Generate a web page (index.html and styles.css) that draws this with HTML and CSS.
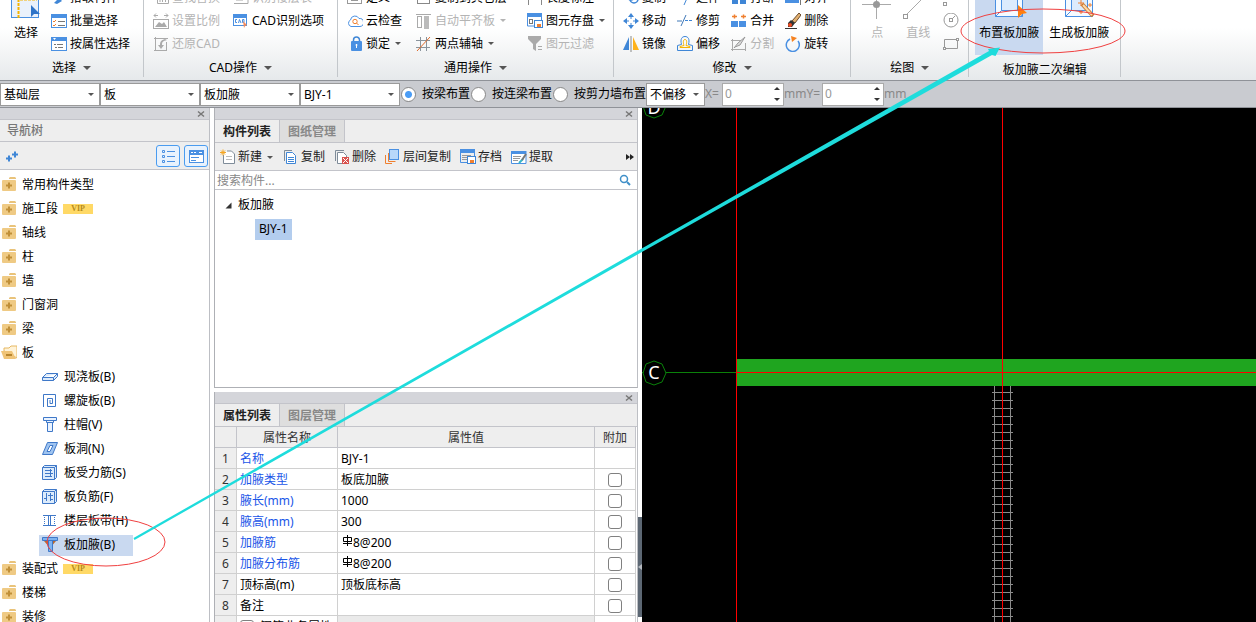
FILE: index.html
```html
<!DOCTYPE html>
<html lang="zh-CN">
<head>
<meta charset="utf-8">
<title>板加腋</title>
<link rel="stylesheet" href="styles.css">
</head>
<body>
<header class="ribbon">
  <section class="group group-select">
    <div class="group-body">
      <button class="big"><svg class="icon-big" viewBox="0 0 32 32"><rect x="1.500" y="0.500" width="27" height="30" fill="#eaf1fb" stroke="#4a8fe0"/><path d="M8.500 31V12.500H27" fill="none" stroke="#f5b400" stroke-width="2" stroke-dasharray="3 1"/><path d="M21 18v12l3-3h6z" fill="#2f74c8"/></svg><span>选择</span></button>
      <div class="col">
        <button class="tool"><svg class="icon" viewBox="0 0 16 16"><path d="M3 13l5-5 3 3-5 3z" fill="#3f86d6"/></svg>拾取构件</button>
        <button class="tool"><svg class="icon" viewBox="0 0 16 16"><rect x=".5" y="1.500" width="15" height="13" fill="#fff" stroke="#4a90e2"/><path d="M0 1h16v4H0z" fill="#4a90e2"/><path d="M2 8l1 1 2-2M2 12l1 1 2-2" stroke="#f08030" fill="none"/><path d="M7 8.500h7M7 12.500h7" stroke="#777"/></svg>批量选择</button>
        <button class="tool"><svg class="icon" viewBox="0 0 16 16"><rect x=".5" y="1.500" width="15" height="13" fill="#fff" stroke="#4a90e2"/><path d="M0 1h16v4H0z" fill="#4a90e2"/><path d="M2 2h3l-1.500 2z" fill="#fff"/><path d="M3 8.500h2M6 8.500h6M4 11.500h2M7 11.500h5" stroke="#777"/></svg>按属性选择</button>
      </div>
    </div>
    <button class="group-label">选择<i class="caret"></i></button>
  </section>
  <section class="group group-cad">
    <div class="group-body">
      <div class="col">
        <button class="tool" disabled><svg class="icon" viewBox="0 0 16 16"><path d="M4.500 4v9.500h11V4M7 8v4M9.500 8v4M12.500 8v4M5 7.500h10" fill="none" stroke="#aaa"/></svg>查找替换</button>
        <button class="tool" disabled><svg class="icon" viewBox="0 0 16 16"><path d="M1 2.500h4M11 2.500h4M3 .5l-2 2 2 2M13 .5l2 2-2 2" stroke="#aaa" fill="none"/><rect x=".5" y="6.500" width="15" height="9" fill="none" stroke="#aaa"/><path d="M2 14l4-5 3 2 2-2 3 5z" fill="#aaa"/></svg>设置比例</button>
        <button class="tool" disabled><svg class="icon" viewBox="0 0 16 16"><path d="M1 2.500h14M1 14.500h12M2.500 1v14M13.500 6v9" fill="none" stroke="#aaa"/><path d="M12 3c-4 1-5 3-5 6h-2l3 4 3-4H9c0-3 1-4 5-5z" fill="#aaa"/></svg>还原CAD</button>
      </div>
      <div class="col">
        <button class="tool" disabled><svg class="icon" viewBox="0 0 16 16"><path d="M1 13.500h14V5M3 10h7" fill="none" stroke="#aaa"/></svg>识别楼层表</button>
        <button class="tool"><svg class="icon" viewBox="0 0 16 16"><rect x=".5" y="2.500" width="13" height="10" fill="#fff" stroke="#4a90e2"/><path d="M0 1h14v4H0z" fill="#4a90e2"/><path d="M4 6.500H2.500v3H4M5.500 10l1-3.500L8 10M9.500 6.500v3H11v-3z" stroke="#4a90e2" fill="none"/><path d="M10 8l4 4-2 1-1 2z" fill="#f58a5a"/></svg>CAD识别选项</button>
      </div>
    </div>
    <button class="group-label">CAD操作<i class="caret"></i></button>
  </section>
  <section class="group group-common">
    <div class="group-body">
      <div class="col">
        <button class="tool"><svg class="icon" viewBox="0 0 16 16"><rect x=".5" y="4.500" width="14" height="9" fill="none" stroke="#999"/><path d="M4 10.500h7M4 7.500h7" stroke="#999"/></svg>定义</button>
        <button class="tool"><svg class="icon" viewBox="0 0 16 16"><path d="M4 13.500a3.500 3.500 0 01-.5-6.500A4.500 4.500 0 0112 5.500a4 4 0 011 8z" fill="#fff" stroke="#4a90e2"/><circle cx="8" cy="8.500" r="2.200" fill="none" stroke="#f08030"/><path d="M9.500 10l2 2" stroke="#f08030"/></svg>云检查</button>
        <button class="tool"><svg class="icon" viewBox="0 0 16 16"><path d="M6.500 7V4a3 3 0 016 0v3" fill="none" stroke="#3f86d6" stroke-width="1.500"/><rect x="4" y="5" width="11" height="10" rx="1" fill="#4a90e2"/><path d="M9.500 8v4M8.500 9h2" stroke="#fff"/></svg>锁定<i class="caret"></i></button>
      </div>
      <div class="col">
        <button class="tool"><svg class="icon" viewBox="0 0 16 16"><rect x="1.500" y="4.500" width="12" height="9" fill="none" stroke="#888"/></svg>复制到其它层</button>
        <button class="tool" disabled><svg class="icon" viewBox="0 0 16 16"><path d="M0 1.500h15" stroke="#aaa"/><rect x="1.500" y="3.500" width="4" height="11" fill="#fff" stroke="#aaa"/><path d="M8 3h5v13H8z" fill="#bbb"/></svg>自动平齐板<i class="caret"></i></button>
        <button class="tool"><svg class="icon" viewBox="0 0 16 16"><path d="M0 4.500h14M0 11.500h14M4.500 1v14M10.500 1v14" stroke="#8a949c"/><path d="M1 15L14 1" stroke="#e06b2a"/></svg>两点辅轴<i class="caret"></i></button>
      </div>
      <div class="col">
        <button class="tool"><svg class="icon" viewBox="0 0 16 16"><path d="M1.500 15V4.500M14.500 15V4.500M1 9.500h14" stroke="#888"/></svg>长度标注</button>
        <button class="tool"><svg class="icon" viewBox="0 0 16 16"><path d="M0 0h15v4H0z" fill="#4a90e2"/><path d="M.5 4v9H7M14.500 4v4" fill="none" stroke="#4a90e2"/><rect x="2.500" y="6.500" width="3" height="4" fill="none" stroke="#777"/><rect x="7.500" y="7.500" width="8" height="7" fill="#fff" stroke="#3f86d6"/><path d="M10 11h4v3h-4z" fill="#f08030"/></svg>图元存盘<i class="caret"></i></button>
        <button class="tool" disabled><svg class="icon" viewBox="0 0 16 16"><path d="M1 0h13v3L9 8v7l-3-2V8L1 3z" fill="#aaa"/><path d="M11 10.500h4M11 13.500h4" stroke="#aaa"/></svg>图元过滤</button>
      </div>
    </div>
    <button class="group-label">通用操作<i class="caret"></i></button>
  </section>
  <section class="group group-modify">
    <div class="group-body">
      <div class="col">
        <button class="tool"><svg class="icon" viewBox="0 0 16 16"><circle cx="8" cy="6" r="4" fill="none" stroke="#3f86d6" stroke-width="1.500"/><circle cx="11" cy="9" r="4" fill="none" stroke="#3f86d6" stroke-width="1.500"/></svg>复制</button>
        <button class="tool"><svg class="icon" viewBox="0 0 16 16"><path d="M8 0l3 4H5zM8 16l3-4H5zM0 8l4-3v6zM16 8l-4-3v6z" fill="#3f86d6"/><path d="M8 3v10M3 8h10" stroke="#3f86d6" stroke-dasharray="3 4"/></svg>移动</button>
        <button class="tool"><svg class="icon" viewBox="0 0 16 16"><path d="M6 1v13H0z" fill="#3f86d6"/><path d="M10 1v13h6z" fill="#ffb21a"/><path d="M8 0v16" stroke="#888"/></svg>镜像</button>
      </div>
      <div class="col">
        <button class="tool"><svg class="icon" viewBox="0 0 16 16"><path d="M7 15l4-9M11 9h5" stroke="#3f86d6"/></svg>延伸</button>
        <button class="tool"><svg class="icon" viewBox="0 0 16 16"><path d="M0 8h5M4 13L9 2" stroke="#3f78b8"/><path d="M8 7.500h8" stroke="#3f86d6" stroke-dasharray="3 1"/></svg>修剪</button>
        <button class="tool"><svg class="icon" viewBox="0 0 16 16"><path d="M.5 14.500V9.500l4-1C3 3 5 .5 8 .5s5 2.500 3.500 8l4 1v5z" fill="none" stroke="#3f86d6"/><path d="M3 11.500h10v-1l-4-1c1-3 1-6-1-6s-2 3-1 6l-4 1z" fill="none" stroke="#f5b400"/></svg>偏移</button>
      </div>
      <div class="col">
        <button class="tool"><svg class="icon" viewBox="0 0 16 16"><path d="M1 9h6v5H1zM9 9h6v5H9z" fill="#3f86d6"/></svg>打断</button>
        <button class="tool"><svg class="icon" viewBox="0 0 16 16"><path d="M0 8h7v6H0zM8 8h7v6H8z" fill="#4a90e2"/><path d="M1 3.500h5M10 3.500h5M3.500 1.500v4M12.500 1.500v4" stroke="#f08030" stroke-width="1.500"/></svg>合并</button>
        <button class="tool" disabled><svg class="icon" viewBox="0 0 16 16"><path d="M0 4.500h10M0 13.500h15M1.500 3v12M14.500 7v8" stroke="#aaa"/><path d="M3 12l4-5 7-6-5 8-5 2z" fill="#ddd" stroke="#999"/></svg>分割</button>
      </div>
      <div class="col">
        <button class="tool"><svg class="icon" viewBox="0 0 16 16"><path d="M0 4h14v9H0z" fill="#4a90e2"/><path d="M15.500 3v12" stroke="#777"/></svg>对齐</button>
        <button class="tool"><svg class="icon" viewBox="0 0 16 16"><path d="M7 8l7-8 2 2-6 8z" fill="#e2b070" stroke="#6b4a2a"/><path d="M3 10l3-3 4 3-3 4H3z" fill="#333"/><circle cx="5" cy="12" r="2" fill="#f04a20"/><path d="M0 15.500h12" stroke="#333"/></svg>删除</button>
        <button class="tool"><svg class="icon" viewBox="0 0 16 16"><path d="M5 3a6.500 6.500 0 108 2" fill="none" stroke="#4a90e2" stroke-width="1.500"/><path d="M6 0l6 2-5 4z" fill="#f58220"/></svg>旋转</button>
      </div>
    </div>
    <button class="group-label">修改<i class="caret"></i></button>
  </section>
  <section class="group group-draw">
    <div class="group-body">
      <button class="big" disabled><svg class="icon-big" viewBox="0 0 32 32"><path d="M1 17.500h29M15.500 12v20" stroke="#aaa"/><circle cx="15.500" cy="17.500" r="3.500" fill="#999"/></svg><span>点</span></button>
      <button class="big" disabled><svg class="icon-big" viewBox="0 0 32 32"><path d="M4 28L26 6" stroke="#aaa"/><rect x="1.500" y="27.500" width="4" height="4" fill="#fff" stroke="#999"/></svg><span>直线</span></button>
      <div class="col">
        <button class="tool" disabled aria-label="弧"><svg class="icon" viewBox="0 0 16 16"><rect x=".5" y="12.500" width="3" height="3" fill="none" stroke="#999"/></svg></button>
        <button class="tool" disabled aria-label="圆"><svg class="icon" viewBox="0 0 16 16"><circle cx="8" cy="7" r="7" fill="none" stroke="#999"/><rect x="6.500" y="5.500" width="3" height="3" fill="none" stroke="#999"/><path d="M9 6l3-3" stroke="#999"/></svg></button>
        <button class="tool" disabled aria-label="矩形"><svg class="icon" viewBox="0 0 16 16"><path d="M1.500 12.500v-9H13M14.500 4v8.500H3" fill="none" stroke="#999"/><rect x=".5" y="11.500" width="2" height="2" fill="#fff" stroke="#999"/><rect x="13.500" y="2.500" width="2" height="2" fill="#fff" stroke="#999"/></svg></button>
      </div>
    </div>
    <button class="group-label">绘图<i class="caret"></i></button>
  </section>
  <section class="group group-haunch">
    <div class="group-body">
      <button class="big active"><svg class="icon-big" viewBox="0 0 32 32"><path d="M2.500 0v29.500h27V0" fill="#f5faff" stroke="#4a90e2"/><path d="M8.500 0v23.500h16V0M2.500 29.500l6-6M29.500 29.500l-5-6" fill="#dcebfd" stroke="#4a90e2"/><path d="M25 18l9 8-5 1-4 4z" fill="#ff7f0e"/></svg><span>布置板加腋</span></button>
      <button class="big"><svg class="icon-big" viewBox="0 0 32 32"><path d="M2.500 0v29.500h27V0" fill="#f5faff" stroke="#4a90e2"/><path d="M8.500 0v23.500h16V0M2.500 29.500l6-6M29.500 29.500l-5-6" fill="#dcebfd" stroke="#4a90e2"/><path d="M19 17l11 12" stroke="#c77a35" stroke-width="4"/><path d="M20 18l9 10" stroke="#ffd9a8" stroke-width="2"/><path d="M15 16h6M18 13v6M25 18h4M27 16v4M16 25h4M18 23v4" stroke="#f08030"/></svg><span>生成板加腋</span></button>
    </div>
    <div class="group-label">板加腋二次编辑</div>
  </section>
</header>

<form class="options">
  <label class="combo"><select aria-label="楼层"><option>基础层</option></select><i class="caret"></i></label>
  <label class="combo"><select aria-label="构件大类"><option>板</option></select><i class="caret"></i></label>
  <label class="combo"><select aria-label="构件类型"><option>板加腋</option></select><i class="caret"></i></label>
  <label class="combo"><select aria-label="构件"><option>BJY-1</option></select><i class="caret"></i></label>
  <label class="radio"><input type="radio" name="mode" checked>按梁布置</label>
  <label class="radio"><input type="radio" name="mode">按连梁布置</label>
  <label class="radio"><input type="radio" name="mode">按剪力墙布置</label>
  <label class="combo combo-small"><select aria-label="偏移"><option>不偏移</option></select><i class="caret"></i></label>
  <label class="unit unit-x" for="dx">X=</label>
  <span class="spin"><input id="dx" value="0" disabled><span class="arrows"><button type="button" class="up" aria-label="X 增加"></button><button type="button" class="down" aria-label="X 减少"></button></span></span>
  <label class="unit unit-y" for="dy">mmY=</label>
  <span class="spin"><input id="dy" value="0" disabled><span class="arrows"><button type="button" class="up" aria-label="Y 增加"></button><button type="button" class="down" aria-label="Y 减少"></button></span></span>
  <span class="unit">mm</span>
</form>

<svg class="defs" aria-hidden="true">
  <symbol id="folder" viewBox="0 1 16 16"><path d="M8 2l1-1h5l1 1v1H8z" fill="#e9c37a"/><rect x="1" y="4" width="14" height="11" rx="1" fill="#efca84"/><path d="M8 6.500v6M5 9.500h6" stroke="#c08f38" stroke-width="2"/></symbol>
  <symbol id="folder-open" viewBox="0 1 16 16"><path d="M3 7V4h5l2-2h6v12z" fill="#fff3d8" stroke="#e6b862"/><path d="M0 7h11l4 8H3z" fill="#f0c477"/><path d="M5 11h6" stroke="#b8862e" stroke-width="2"/></symbol>
  <symbol id="close" viewBox="0 0 8 8"><path d="M1 1.500l6 5M7 1.500l-6 5" stroke="#777" stroke-width="1.500"/></symbol>
</svg>

<main class="workspace">
  <aside class="panel nav">
    <div class="strip"><button aria-label="关闭导航树"><svg viewBox="0 0 8 8"><use href="#close"/></svg></button></div>
    <h2 class="nav-title">导航树</h2>
    <div class="nav-tools">
      <button class="plus" aria-label="展开"><svg class="icon" viewBox="0 0 16 16"><path d="M3 10.500h6M6 7.500v6M9 6.500h6M12 3.500v6" stroke="#3f86d6" stroke-width="2"/></svg></button>
      <button class="view" aria-label="列表"><svg class="icon" viewBox="0 0 16 16"><path d="M2.500 2.500h2v2h-2zM2.500 7.500h2v2h-2zM2.500 12.500h2v2h-2zM7 3.500h8M7 8.500h8M7 13.500h8" fill="none" stroke="#4a90e2"/></svg></button>
      <button class="view" aria-label="卡片"><svg class="icon" viewBox="0 0 16 16"><rect x="1.500" y="2.500" width="14" height="12" fill="#fff" stroke="#4a90e2"/><path d="M1 2h15v5H1z" fill="#4a90e2"/><path d="M3 4.500h2M6 4.500h2M11 4.500h3" stroke="#fff"/><path d="M3 9.500h8M3 12.500h5" stroke="#4a90e2"/></svg></button>
    </div>
    <ul class="tree">
      <li><svg class="icon"><use href="#folder"/></svg>常用构件类型</li>
      <li><svg class="icon"><use href="#folder"/></svg>施工段<b class="vip">VIP</b></li>
      <li><svg class="icon"><use href="#folder"/></svg>轴线</li>
      <li><svg class="icon"><use href="#folder"/></svg>柱</li>
      <li><svg class="icon"><use href="#folder"/></svg>墙</li>
      <li><svg class="icon"><use href="#folder"/></svg>门窗洞</li>
      <li><svg class="icon"><use href="#folder"/></svg>梁</li>
      <li><svg class="icon"><use href="#folder-open"/></svg>板</li>
      <li class="child"><span><svg class="icon" viewBox="0 0 16 16"><path d="M.5 8.500l4-4h11v3l-4 4H.5zM.5 8.500h11l4-4M11.500 8.500v3" fill="#dcebfb" stroke="#3f78c8"/></svg>现浇板(B)</span></li>
      <li class="child"><span><svg class="icon" viewBox="0 0 16 16"><path d="M1.500 14V1.500h12v12h-8v-8h5v5H8V7" fill="none" stroke="#3f78c8"/></svg>螺旋板(B)</span></li>
      <li class="child"><span><svg class="icon" viewBox="0 0 16 16"><path d="M1.500.5h13v3h-13zM4.500 3.500v2h7v-2M5.500 5.500v9h5v-9" fill="#eaf3ff" stroke="#3f78c8"/></svg>柱帽(V)</span></li>
      <li class="child"><span><svg class="icon" viewBox="0 0 16 16"><path d="M.5 13.500l5-12h10l-5 12z" fill="#9fc4f0" stroke="#3f78c8"/><path d="M5 10.500l3-6h3l-3 6z" fill="#fff" stroke="#3f78c8"/></svg>板洞(N)</span></li>
      <li class="child"><span><svg class="icon" viewBox="0 0 16 16"><path d="M.5 2.500l2-2h12v12l-2 2H.5zM.5 2.500h12v12M12.500 2.500l2-2" fill="#dcebfb" stroke="#3f78c8"/><path d="M3 5.500h7M3 8.500h8M3 11.500h7M8.500 4v8" stroke="#3f78c8"/></svg>板受力筋(S)</span></li>
      <li class="child"><span><svg class="icon" viewBox="0 0 16 16"><path d="M.5 2.500l2-2h12v12l-2 2H.5zM.5 2.500h12v12M12.500 2.500l2-2" fill="#dcebfb" stroke="#3f78c8"/><path d="M4.500 4v8M8.500 4v8M2 9.500h3M6 6.500h5M8 10.500h3" stroke="#3f78c8"/></svg>板负筋(F)</span></li>
      <li class="child"><span><svg class="icon" viewBox="0 0 16 16"><path d="M1 2.500h13M1 12.500h13M6.500 3v10M8.500 3v10" stroke="#3f78c8"/><path d="M2.500 4v8M12.500 4v8" stroke="#3f78c8" stroke-dasharray="1 1"/></svg>楼层板带(H)</span></li>
      <li class="child selected"><span><svg class="icon" viewBox="0 0 16 16"><path d="M2 4h4l2 7M14 4h-4L8 11" fill="#b56a35"/><path d="M.5.5h15v3H.5zM6.500 3.500v11h4v-11" fill="#7db3f0" stroke="#3f78c8"/></svg>板加腋(B)</span></li>
      <li><svg class="icon"><use href="#folder"/></svg>装配式<b class="vip">VIP</b></li>
      <li><svg class="icon"><use href="#folder"/></svg>楼梯</li>
      <li><svg class="icon"><use href="#folder"/></svg>装修</li>
    </ul>
  </aside>

  <div class="middle">
    <section class="panel components">
      <div class="strip"><button aria-label="关闭构件列表"><svg viewBox="0 0 8 8"><use href="#close"/></svg></button></div>
      <div class="tabs"><button class="tab current">构件列表</button><button class="tab">图纸管理</button></div>
      <div class="toolbar">
        <button><svg class="icon" viewBox="0 0 16 16"><path d="M3.500 6v8.500h11V5l-3-3H7" fill="#fff" stroke="#7f8c99"/><path d="M6 7.500h6M6 10.500h6" stroke="#bbb"/><path d="M0 3.500h6M3 .5v6M1 1.500l4 4M5 1.500l-4 4" stroke="#f5a623"/></svg>新建<i class="caret"></i></button>
        <button><svg class="icon" viewBox="0 0 16 16"><path d="M1.500 12V1.500H9" fill="none" stroke="#7f8c99"/><path d="M3.500 3.500h6l3 3v8h-9z" fill="#fff" stroke="#3f86d6"/><path d="M5 8.500h6M5 10.500h6M5 12.500h6" stroke="#3f86d6"/></svg>复制</button>
        <button><svg class="icon" viewBox="0 0 16 16"><path d="M1.500 12V1.500H10" fill="none" stroke="#7f8c99"/><path d="M3.500 3.500h6l3 3v8h-9z" fill="#fff" stroke="#7f8c99"/><path d="M8 8h7v7H8z" fill="#d9534f"/><path d="M9 9l5 5M14 9l-5 5" stroke="#fff"/></svg>删除</button>
        <button><svg class="icon" viewBox="0 0 16 16"><path d="M.5 6v8.500H7M3.500 4v8.500h7" fill="none" stroke="#f08030"/><rect x="4.500" y=".5" width="9" height="10" fill="#b8d8fa" stroke="#4a90e2"/></svg>层间复制</button>
        <button><svg class="icon" viewBox="0 0 16 16"><path d="M.5 1v12.500H7M14.500 1v6" fill="none" stroke="#4a90e2"/><path d="M0 0h15v4H0z" fill="#4a90e2"/><path d="M2 6.500h9M2 8.500h5M2 10.500h5" stroke="#999"/><rect x="7.500" y="7.500" width="8" height="7" fill="#fff" stroke="#3f86d6"/><path d="M10 11h4v3h-4z" fill="#f08030"/></svg>存档</button>
        <button><svg class="icon" viewBox="0 0 16 16"><path d="M.5 2v12.500H15V2" fill="#fff" stroke="#4a90e2"/><path d="M0 2h15v3H0z" fill="#4a90e2"/><path d="M2 7.500h8M2 9.500h7M2 11.500h5" stroke="#999"/><path d="M8 14l4-4" stroke="#35b6c9" stroke-width="2"/><path d="M11 11l4-6" stroke="#777" stroke-width="2"/></svg>提取</button>
        <button class="more" aria-label="更多"><svg viewBox="0 0 8 6"><path d="M0 0l4 3-4 3zM4 0l4 3-4 3z" fill="#222"/></svg></button>
      </div>
      <label class="search"><input placeholder="搜索构件..." aria-label="搜索构件"><svg class="icon" viewBox="0 0 16 16"><circle cx="7" cy="7" r="3.500" fill="none" stroke="#3f8fc8" stroke-width="1.500"/><path d="M10 10l3 3" stroke="#3f8fc8" stroke-width="2"/></svg></label>
      <ul class="list">
        <li><svg viewBox="0 0 7 7"><path d="M6.500.5v6h-6z" fill="#333"/></svg>板加腋</li>
        <li class="leaf"><span>BJY-1</span></li>
      </ul>
    </section>

    <section class="panel props">
      <div class="strip"><button aria-label="关闭属性列表"><svg viewBox="0 0 8 8"><use href="#close"/></svg></button></div>
      <div class="tabs"><button class="tab current">属性列表</button><button class="tab">图层管理</button></div>
      <table>
        <colgroup><col class="c-num"><col class="c-name"><col><col class="c-add"></colgroup>
        <thead><tr><th></th><th>属性名称</th><th>属性值</th><th>附加</th></tr></thead>
        <tbody>
          <tr><th>1</th><td class="key">名称</td><td>BJY-1</td><td></td></tr>
          <tr><th>2</th><td class="key">加腋类型</td><td>板底加腋</td><td><input type="checkbox" aria-label="附加加腋类型"></td></tr>
          <tr><th>3</th><td class="key">腋长(mm)</td><td>1000</td><td><input type="checkbox" aria-label="附加腋长"></td></tr>
          <tr><th>4</th><td class="key">腋高(mm)</td><td>300</td><td><input type="checkbox" aria-label="附加腋高"></td></tr>
          <tr><th>5</th><td class="key">加腋筋</td><td><svg class="rebar" viewBox="0 0 10 12"><path d="M5.500 0v11M1.500 2.500h8v4h-8zM1 8.500h9" fill="none" stroke="#000"/></svg>8@200</td><td><input type="checkbox" aria-label="附加加腋筋"></td></tr>
          <tr><th>6</th><td class="key">加腋分布筋</td><td><svg class="rebar" viewBox="0 0 10 12"><path d="M5.500 0v11M1.500 2.500h8v4h-8zM1 8.500h9" fill="none" stroke="#000"/></svg>8@200</td><td><input type="checkbox" aria-label="附加加腋分布筋"></td></tr>
          <tr><th>7</th><td>顶标高(m)</td><td>顶板底标高</td><td><input type="checkbox" aria-label="附加顶标高"></td></tr>
          <tr><th>8</th><td>备注</td><td></td><td><input type="checkbox" aria-label="附加备注"></td></tr>
          <tr class="section"><th>9</th><td><label><input type="checkbox">钢筋业务属性</label></td><td></td><td></td></tr>
        </tbody>
      </table>
    </section>
  </div>

  <div class="splitter"><button aria-label="收起面板"><svg viewBox="0 0 4 6"><path d="M4 0v6L0 3z" fill="#b5bac0"/></svg></button></div>

  <svg class="drawing" role="img" aria-label="平面图">
    <defs><pattern id="ties" width="21" height="8" patternUnits="userSpaceOnUse" x="350" y="280"><path d="M0 4.500h21" stroke="#8c8c8c"/></pattern></defs>
    <rect x="95" y="251" width="100%" height="27" fill="#1fa51f"/>
    <rect x="350" y="280" width="21" height="100%" fill="url(#ties)"/>
    <path d="M352.500 278v2000M368.500 278v2000" stroke="#8c8c8c"/>
    <path d="M0 264.500h94" stroke="#0a820a"/>
    <path d="M94.500 0v2000M360.500 0v2000M95 264.500h4000" stroke="#f00"/>
    <path d="M12 253l8 3 4 9-4 9-8 3-8-3-3-9 3-9zM12-14l8 3 4 9-4 9-8 3-8-3-3-9 3-9z" fill="#000" stroke="#0a820a"/>
    <text x="12" y="271" class="axis">C</text>
    <text x="12" y="6" class="axis">D</text>
  </svg>
</main>

<svg class="notes" aria-hidden="true">
  <ellipse cx="1043" cy="31" rx="82" ry="22"/>
  <ellipse cx="106" cy="542" rx="59" ry="24"/>
  <path d="M133.500 538L640 249.500 989 51l-1-2 12-1.500L995.500 56l-3.500-1L641 252.500 134.500 540z"/>
</svg>
</body>
</html>
```

FILE: styles.css
```css
* { box-sizing: border-box; }

body {
  margin: 0;
  height: 100vh;
  overflow: hidden;
  display: flex;
  flex-direction: column;
  background: #fff;
  color: #000;
  font: 12px/16px "Noto Sans", "Noto Sans CJK SC", sans-serif;
}

button, input, select { font: inherit; color: inherit; }
button { border: 0; padding: 0; background: none; white-space: nowrap; }
ul { list-style: none; margin: 0; padding: 0; }
svg { display: block; flex: none; }
.defs { position: absolute; width: 0; height: 0; }
.icon { width: 16px; height: 16px; }

.caret {
  width: 6px;
  border: solid transparent;
  border-width: 3px 3px 0;
  border-top-color: #555;
}

/* ribbon */
.ribbon {
  flex: none;
  height: 80px;
  overflow: hidden;
  display: flex;
  align-items: flex-end;
  padding-bottom: 3px;
  background: linear-gradient(#fff 35%, #e6e9eb);
}
.group { border-right: 1px solid #c3c7cb; flex: none; }
.group-body { display: flex; align-items: flex-end; }
.group-select .group-body { padding: 0 13px 0 10px; gap: 9px; }
.group-cad .group-body { padding: 0 13px 0 9px; gap: 13px; }
.group-common .group-body { padding: 0 8px 0 9px; gap: 14px; }
.group-common .col:last-child { margin-left: 6px; }
.group-modify .group-body { padding: 0 22px 0 9px; gap: 11px; }
.group-draw .group-body { padding: 0 9px 0 10px; gap: 9px; }
.group-haunch .group-body { padding: 0 7px 0 6px; gap: 2px; }
.col { display: grid; grid-template-rows: repeat(3, 23px); align-self: flex-start; }
.tool { display: flex; align-items: center; gap: 3px; }
.tool .caret { margin-left: 2px; }
.tool:disabled, .big:disabled { color: #b4b4b4; }
.tool:disabled .caret { border-top-color: #b4b4b4; }
.big {
  display: flex;
  flex-direction: column;
  align-items: center;
  gap: 6px;
  min-width: 32px;
  padding-bottom: 14px;
}
.icon-big { width: 32px; height: 32px; overflow: visible; }
.group-haunch .big { padding: 0 4px 14px; }
.big.active { background: #c9d9f0; }
.group-label {
  display: flex;
  align-items: center;
  justify-content: center;
  gap: 7px;
  width: 100%;
  padding-top: 4px;
  line-height: 18px;
}
.group-label .caret { width: 8px; border-width: 4px 4px 0; }
.group-haunch .group-label { padding-top: 8px; line-height: 14px; }

/* option bar */
.options {
  flex: none;
  height: 28px;
  display: flex;
  align-items: center;
  border: solid #8f9298;
  border-width: 1px 0;
  background: #c9cbd0;
}
.combo { display: flex; align-items: center; width: 100px; height: 23px; border: 1px solid #9a9a9a; background: #fff; padding-right: 5px; }
.combo select { flex: 1; min-width: 0; appearance: none; border: 0; background: none; padding: 1px 3px 0; }
.combo-small { width: 59px; }
.radio { display: flex; align-items: center; gap: 6px; margin-left: 1px; white-space: nowrap; }
.radio input {
  appearance: none;
  width: 15px;
  height: 15px;
  margin: 0;
  border: 1px solid #888;
  border-radius: 50%;
  background: #fff;
}
.radio input:checked { background: radial-gradient(circle, #4a9cf5 3px, #fff 4px); }
.unit { color: #888; }
.unit-x { width: 17px; }
.unit-y { width: 38px; }
.spin { display: flex; width: 62px; height: 23px; border: 1px solid #aaa; background: #fff; }
.spin input { flex: 1; min-width: 0; border: 0; padding: 0 2px; background: none; color: #999; }
.arrows { display: flex; flex-direction: column; justify-content: space-around; padding-right: 3px; }
.up, .down { width: 6px; border: solid transparent; }
.up { border-width: 0 3px 3px; border-bottom-color: #333; }
.down { border-width: 3px 3px 0; border-top-color: #333; }

/* docked panels */
.workspace { flex: 1; min-height: 0; display: flex; }
.panel { border-right: 1px solid #bdbfc4; overflow: hidden; }
.strip { height: 12px; display: flex; justify-content: flex-end; align-items: center; padding-right: 4px; background: #d4d5da; border-bottom: 1px solid #c3c4ca; }
.strip svg { width: 8px; height: 8px; }

.nav { flex: none; width: 210px; }
.nav-title { margin: 0; padding: 1px 7px 0; font-size: 12px; font-weight: 500; line-height: 20px; color: #777; background: #eee; border-bottom: 1px solid #c3c4ca; }
.nav-tools { display: flex; align-items: center; gap: 4px; height: 28px; padding: 0 1px 0 3px; background: #eee; border-bottom: 1px solid #c3c4ca; }
.plus { margin-right: auto; }
.view { display: grid; place-items: center; width: 24px; height: 22px; border: 1px solid #4a9cf0; border-radius: 3px; background: #e8f2fd; }
.tree { padding-top: 3px; }
.tree li { display: flex; align-items: center; gap: 5px; height: 24px; padding-left: 1px; }
.tree .child { padding-left: 39px; }
.tree .child span { display: flex; align-items: center; gap: 6px; height: 21px; padding: 0 18px 0 3px; }
.tree .selected span { background: #c9d9f0; }
.vip { width: 30px; background: #ffd966; color: #b58a1a; font: bold 8px/10px "Liberation Serif", serif; text-align: center; }

.middle { flex: none; width: 424px; margin-left: 4px; display: flex; flex-direction: column; gap: 4px; }
.middle .panel { border-left: 1px solid #aeb0b5; }
.components { height: 280px; border-bottom: 1px solid #aeb0b5; }
.props { flex: 1; }
.tabs { display: flex; height: 23px; background: #eee; border-bottom: 1px solid #c3c4ca; }
.tab { width: 65px; padding-top: 2px; border-right: 1px solid #c3c4ca; font-weight: 700; color: #888; background: #dedede; }
.tab.current { color: #222; background: #eee; }
.toolbar { display: flex; align-items: center; gap: 9px; height: 28px; padding: 1px 3px 0 5px; background: #eee; border-bottom: 1px solid #c3c4ca; }
.toolbar button { display: flex; align-items: center; gap: 2px; color: #222; }
.toolbar .caret { margin: 0 1px 0 3px; }
.toolbar .more { margin-left: auto; }
.more svg { width: 8px; height: 6px; }
.search { display: flex; align-items: center; height: 19px; padding-right: 4px; border-bottom: 1px solid #c3c4ca; }
.search input { flex: 1; min-width: 0; border: 0; padding: 2px 2px 0; outline: 0; }
.search input::placeholder { color: #888; }
.list { padding-top: 3px; }
.list li { display: flex; align-items: center; gap: 6px; height: 24px; padding-left: 10px; }
.list svg { width: 7px; height: 7px; }
.list .leaf { padding-left: 40px; }
.leaf span { padding: 0 4px 1px; line-height: 20px; background: #b3cdee; }

table { width: 100%; table-layout: fixed; border-collapse: separate; border-spacing: 0; padding-right: 1px; }
.c-num { width: 22px; }
.c-name { width: 101px; }
.c-add { width: 41px; }
td, th { height: 21px; padding: 1px 3px 0; border: solid #d0d0d0; border-width: 0 1px 1px 0; font-weight: 400; line-height: 16px; white-space: nowrap; }
th { background: #eee; color: #333; }
thead th { border-color: #c3c4ca; padding-top: 2px; }
th:first-child { padding: 1px 0 0; }
.key { color: #1a56e8; }
td:last-child { text-align: center; }
table input {
  appearance: none;
  display: block;
  width: 14px;
  height: 14px;
  margin: 0 auto;
  border: 1px solid #808080;
  border-radius: 3px;
  background: #fff;
}
.rebar { display: inline-block; width: 10px; height: 12px; margin: 0 1px; }
.section label { display: flex; align-items: center; gap: 6px; }
.section label input { margin: 0; flex: none; }
.section td:nth-child(3) { background: #eaeaea; }

.splitter { flex: none; width: 4px; display: flex; flex-direction: column; justify-content: flex-end; padding-bottom: 5px; }
.splitter button { height: 100px; background: #5c6773; }
.splitter svg { width: 4px; height: 6px; }

.drawing { flex: 1; min-width: 0; height: 100%; background: #000; }
.axis { fill: #fff; font: 18px "Noto Sans", sans-serif; text-anchor: middle; }

/* annotation marks */
.notes { position: absolute; inset: 0; width: 100%; height: 100%; pointer-events: none; }
.notes ellipse { fill: none; stroke: #f04040; }
.notes path { fill: #1edcdc; }
```
